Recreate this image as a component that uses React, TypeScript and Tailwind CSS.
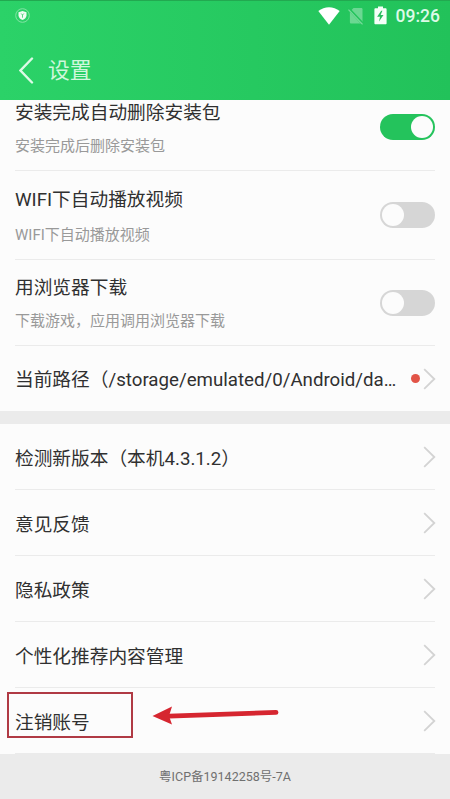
import clsx from "clsx";

const toggles = [
  {
    title: "安装完成自动删除安装包",
    desc: "安装完成后删除安装包",
    on: true,
    row: "-mt-[17px] h-[88px]",
    text: "gap-[8px] pt-[5px]",
  },
  {
    title: "WIFI下自动播放视频",
    desc: "WIFI下自动播放视频",
    on: false,
    row: "h-[89px]",
    text: "gap-[10px] pt-[4px]",
  },
  {
    title: "用浏览器下载",
    desc: "下载游戏，应用调用浏览器下载",
    on: false,
    row: "h-[86px]",
    text: "gap-[8px] pt-[3px]",
  },
];

const links = [
  "检测新版本（本机4.3.1.2）",
  "意见反馈",
  "隐私政策",
  "个性化推荐内容管理",
  "注销账号",
];

function Chevron() {
  return (
    <svg width="13" height="22" viewBox="0 0 13 22" fill="none" className="shrink-0">
      <path d="M1.2 1.2L11.3 11L1.2 20.8" stroke="#d3d3d3" strokeWidth="1.8" />
    </svg>
  );
}

function Toggle({ on }: { on: boolean }) {
  return (
    <div
      className={clsx(
        "flex h-[26px] w-[55px] shrink-0 items-center rounded-full px-0.5",
        on ? "justify-end bg-[#24c35c]" : "justify-start bg-[#d6d6d6]"
      )}
    >
      <div className="size-[22px] rounded-full bg-[#fcfcfc]" />
    </div>
  );
}

function StatusBar() {
  return (
    <div className="flex h-[30px] items-center pr-[10px] pl-[15px]">
      <svg width="15" height="15" viewBox="0 0 15 15" fill="none" className="-mt-px">
        <circle cx="7.5" cy="7.5" r="6.8" stroke="#8de5ac" strokeWidth="0.9" />
        <path d="M7.5 3L11.5 4.2V7.3C11.5 9.6 9.8 11.2 7.5 12.1C5.2 11.2 3.5 9.6 3.5 7.3V4.2Z" fill="#effcf3" />
        <path d="M6.2 5.5L7.5 7L8.8 5.5M7.5 7V9.7" stroke="#48cf78" strokeWidth="0.9" />
      </svg>
      <svg width="22" height="18" viewBox="0 0 22 18" className="-mt-px ml-auto">
        <path d="M0.3 4.1C6.5 -1.1 15.5 -1.1 21.7 4.1L11 17.7Z" fill="#fff" />
      </svg>
      <svg width="16" height="18" viewBox="0 0 16 18" fill="none" className="-mt-px ml-[8px]">
        <path d="M5.5 1H13.2C14 1 14.5 1.5 14.5 2.3V16.5H3.2C2.4 16.5 1.9 16 1.9 15.2V4.6Z" fill="#6bd892" />
        <path d="M0.7 1.8L15 17" stroke="#24c45d" strokeWidth="2.8" />
        <path d="M0.5 2.7L14.5 17.4" stroke="#7adc9d" strokeWidth="1.2" />
      </svg>
      <svg width="13" height="19" viewBox="0 0 13 19" className="-mt-px ml-[10px]">
        <path d="M4 0.5H9V2.3H11.5C12.2 2.3 12.6 2.7 12.6 3.4V17.2C12.6 17.9 12.2 18.3 11.5 18.3H1.5C0.8 18.3 0.4 17.9 0.4 17.2V3.4C0.4 2.7 0.8 2.3 1.5 2.3H4Z" fill="#f5fff8" />
        <path d="M7.2 4.7L3.1 10.7H6L5 15.6L9.5 9.1H6.6L8.4 4.7Z" fill="#29bd5f" />
      </svg>
      <span className="mt-px ml-[9px] text-[17.5px] leading-none font-medium text-[#ddfae7]">09:26</span>
    </div>
  );
}

export default function App() {
  return (
    <div className="flex h-[799px] w-[450px] flex-col overflow-hidden bg-[#fcfcfc] font-[Roboto,'Noto_Sans_CJK_SC',sans-serif] text-[#303030]">
      <header className="z-10 h-[100px] shrink-0 border-t border-[#22a950] bg-linear-to-r from-[#2bd268] to-[#22c25a]">
        <StatusBar />
        <div className="flex h-[78px] items-center pl-[19px]">
          <svg width="15" height="27" viewBox="0 0 15 27" fill="none">
            <path d="M13 1.5L1.5 13.5L13 25.5" stroke="#dcfae6" strokeWidth="2.4" strokeLinecap="round" />
          </svg>
          <h1 className="mt-[2px] ml-[14px] text-[21.8px] leading-none text-[#cff7dc]">设置</h1>
        </div>
      </header>

      <main className="shrink-0">
        <section>
          {toggles.map((item) => (
            <div
              key={item.title}
              className={clsx(
                "mx-[15px] flex items-center justify-between border-b border-[#ebebeb]",
                item.row
              )}
            >
              <div className={clsx("flex flex-col", item.text)}>
                <p className="text-[18.7px] leading-[26px]">{item.title}</p>
                <p className="text-[15px] leading-6 text-[#999]">{item.desc}</p>
              </div>
              <Toggle on={item.on} />
            </div>
          ))}
          <div className="mr-[14px] ml-[15px] flex h-[65px] items-center">
            <p className="w-[384px] shrink-0 pt-[3px] text-[18.7px] whitespace-nowrap">
              当前路径（/storage/emulated/0/Android/da…
            </p>
            <span className="ml-[12px] size-[9px] shrink-0 rounded-full bg-[#e25447]" />
            <span className="ml-[3px]">
              <Chevron />
            </span>
          </div>
        </section>

        <section className="border-t-[13px] border-[#ebebeb]">
          {links.map((label, i) => (
            <div
              key={label}
              className="relative mx-[15px] flex h-[66px] items-center justify-between border-b border-[#ebebeb]"
            >
              <p className="pt-[4px] text-[18.7px] leading-7">{label}</p>
              <span className="-mr-px">
                <Chevron />
              </span>
              {i === links.length - 1 && (
                <>
                  <div className="absolute top-[4px] -left-[8px] h-[46px] w-[126px] border-2 border-[#b03a44]" />
                  <svg
                    width="128"
                    height="20"
                    viewBox="0 0 128 20"
                    fill="none"
                    className="absolute top-[18px] left-[137px]"
                  >
                    <path d="M17 10.2L124 6.4" stroke="#d62630" strokeWidth="4.8" strokeLinecap="round" />
                    <path d="M0.5 10L20 0.5L17 10L20 18.5Z" fill="#d62630" />
                  </svg>
                </>
              )}
            </div>
          ))}
        </section>
      </main>

      <footer className="flex flex-1 items-center justify-center bg-[#ebebeb] pt-px text-[12.5px] text-[#707070]">
        粤ICP备19142258号-7A
      </footer>
    </div>
  );
}
